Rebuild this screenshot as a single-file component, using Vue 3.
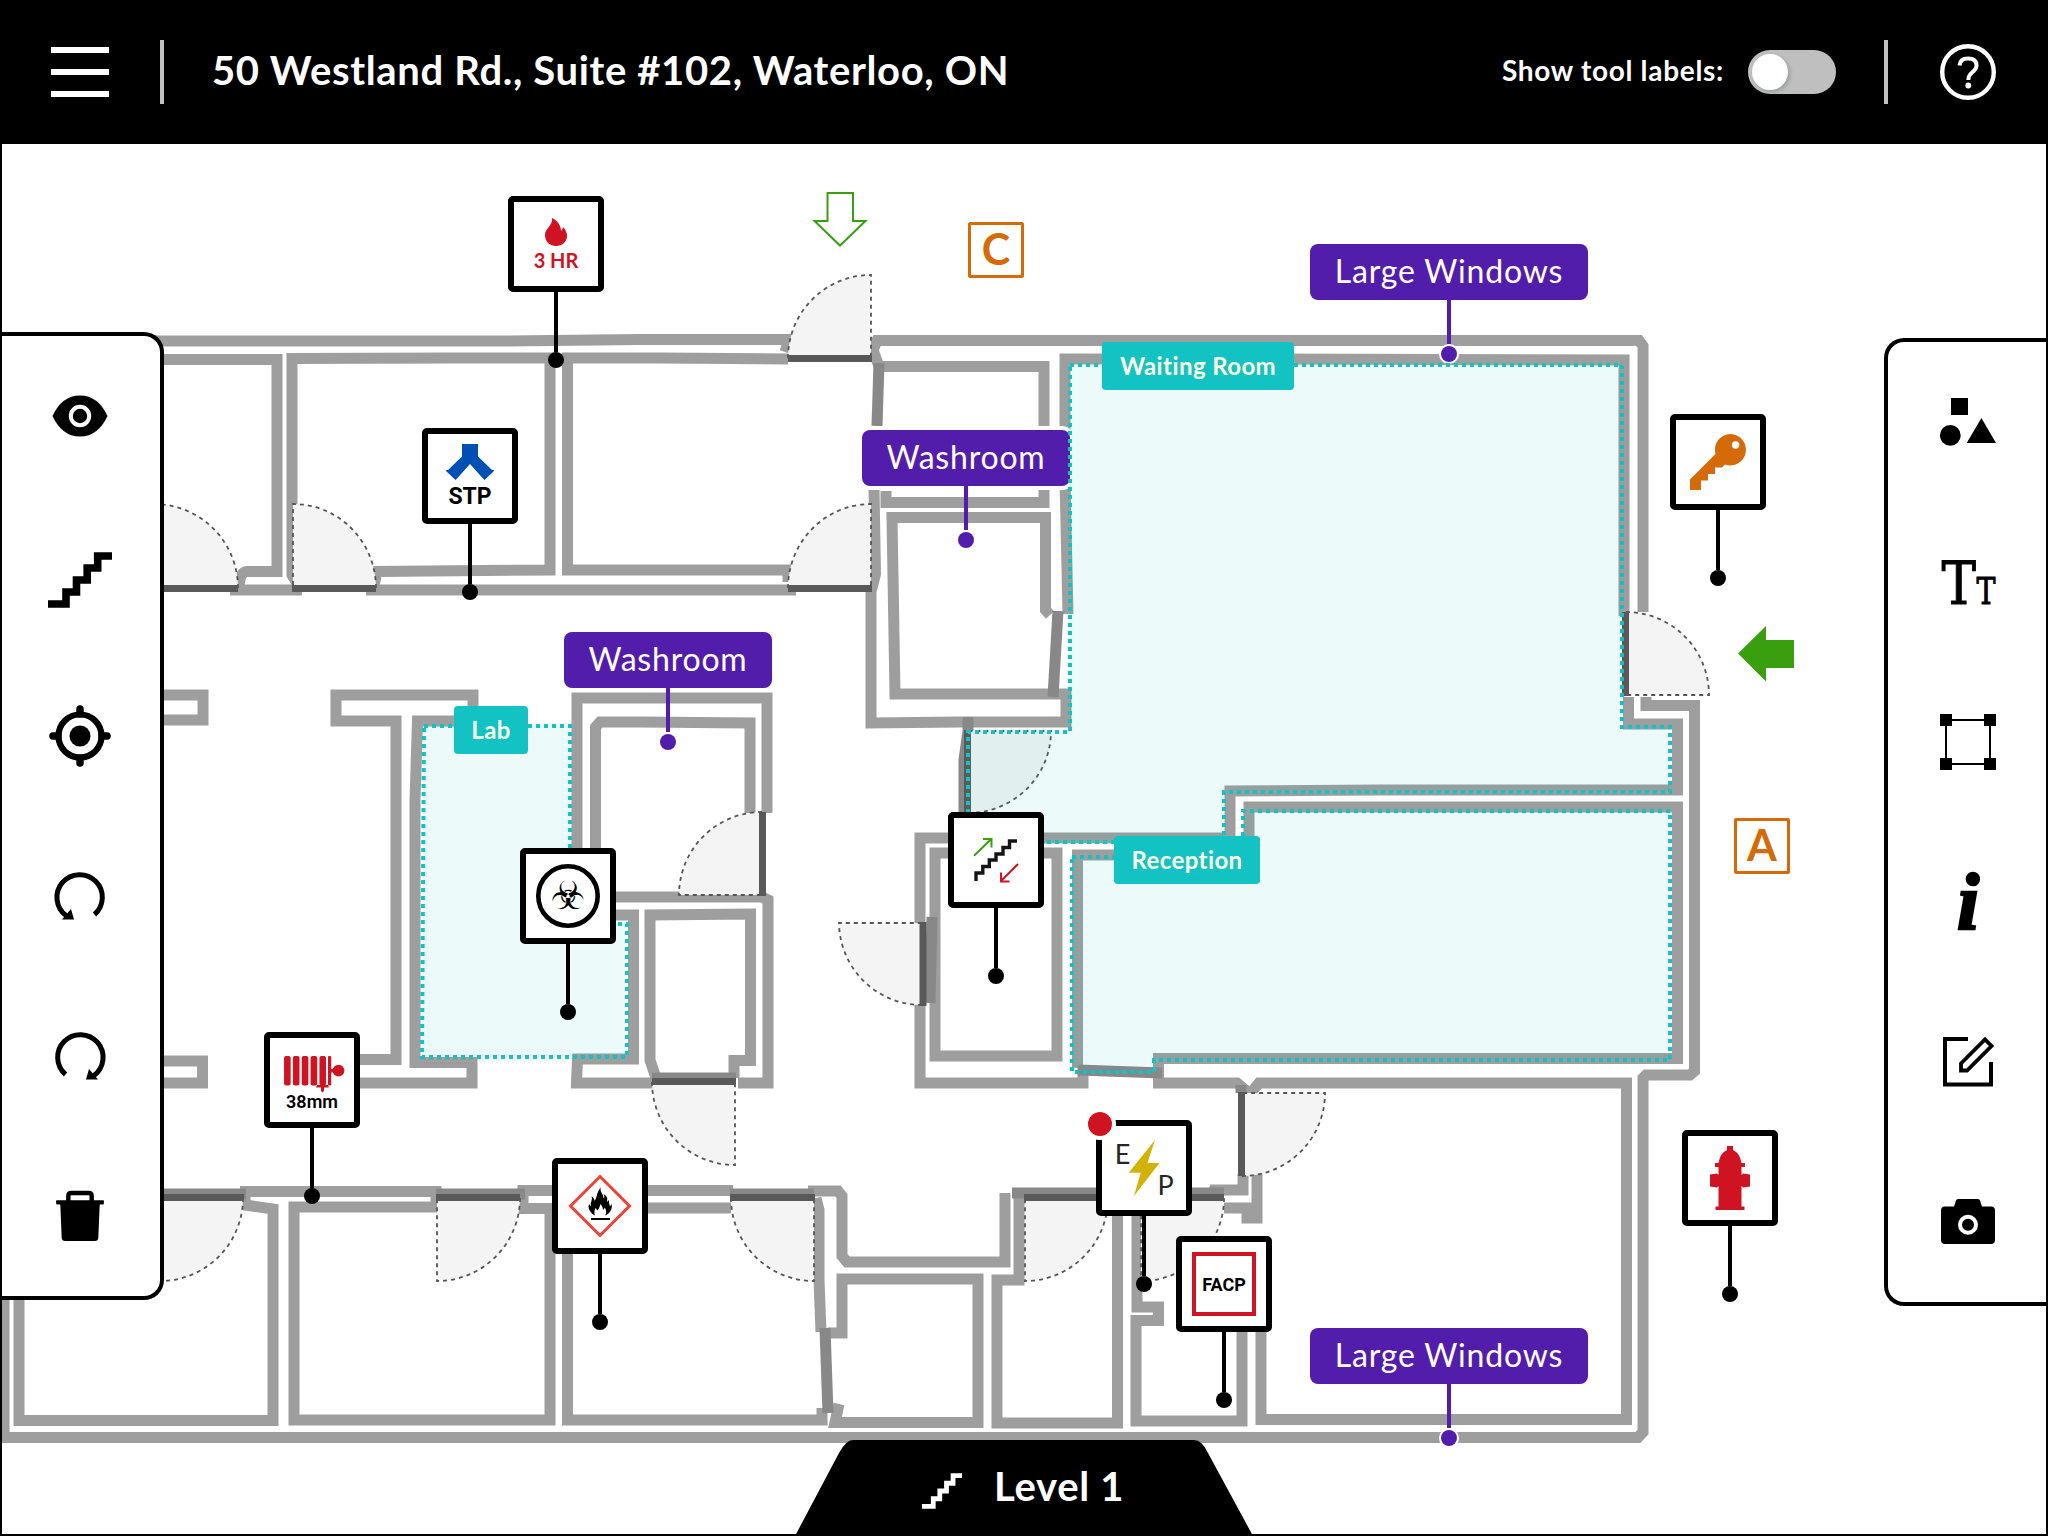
<script setup>
import { ref } from 'vue';

const showLabels = ref(false);

// plan coordinates are page pixels, the map starts below the header
const HEADER = 144;

const walls = [
    'M0 341 H500 L640 339.5 H789 L785 352',
    'M160 359.5 H277 V571.5 H247 Q239 572 239 590',
    'M230 590 H302',
    'M298 585 L292 575 V358.5 L450 358 H550 V570 L377 571.5 L374 586',
    'M366 590 H796',
    'M788 359 L660 358 H567.5 V570 H788 V582',
    'M160 695 H203 V720 H160',
    'M160 1061 H202.500 V1083 H160',
    'M340 1059.500 H396 V721 H336 V695 H473 V718',
    'M473 721 H417.500 L415 800 V1062.500 H472 V1083 H340',
    'M767 813 V698 H577 V915 H633.500 V1059 H577.500 L576.500 1083 H656',
    'M750 813 V723 L640 722 H600 L595.500 727 V897 H762 L768 900 V1083 H738',
    'M656 1078 L650 1060 V915 L750.500 914 V1060.500 H734 V1078',
    'M1643 612 V346 L1639 340.500 H877 L873 350 L879 366.500 H1044 V502.500 H886 V491',
    'M874 488 L875.500 574 L871 592 V723 L960 722 H1066 V694 H895 L892 517.500 H1045.500 V610 L1050 615',
    'M1624 616 V360 L1260 359 H1065 V480 L1068 614',
    'M1628.500 697 V724 H1677.500 V790 H1380 L1230 791 V838 H920 V1083 H1083 V1066',
    'M1646 697 V705.500 H1694.500 V1071 L1690 1075 H1646 L1643 1078 V1432 L1638 1437.500 H0',
    'M1077.500 1068 V855 H1249 V807 H1677.500 V1058.500 H1158.500 V1083 H1237 L1250 1094 L1259 1083 H1626.500 V1419.500 H1261 V1330',
    'M935 853 H1057 V1056 H935 Z',
    'M1243 1174 V1190 H1214 L1211 1197',
    'M1257 1170 V1218 H1247 V1208 H1224',
    'M240 1191.500 H436 V1207 H294 V1420 H550 V1208.500 H523 V1190.500 H733',
    'M245 1193 V1205 L273 1209 V1420.500 H19 V1290',
    'M4 1290 V1437',
    'M731 1208 H567.500 V1420 H822 V1408',
    'M808 1191 H838 L842 1196 V1256 L847 1262 H1005 V1193',
    'M816 1198 L819 1210 V1280 L821 1332',
    'M828 1333 H842 V1279 H978 V1422.500 H835 L839 1404',
    'M1019 1190 V1280 H997 V1423 H1117.500 V1200',
    'M1137 1200 V1307 H1158.500 V1320.500 H1136 V1421 H1242 V1325',
];

const darkWalls = [
    'M879 363 L877 426',
    'M1058 611 L1053 697',
    'M968 717 V731 L964 760 V812',
    'M932 917 L930 1003',
    'M1078 1070 L1162 1073',
    'M1241 1085 V1093',
    'M652 1078 H736',
    'M160 1194 H246',
    'M436 1194 H525',
    'M730 1194 H814',
    'M1012 1193 H1224',
    'M825 1328 L828 1413',
];

// bar: the closed door leaf, area: the quarter circle it swings through
const doors = [
    { bar: 'M788 358.500 H872', area: 'M788 358 A83 83 0 0 1 871 275 V358' },
    { bar: 'M788 588.500 H872', area: 'M788 588 A83 84 0 0 1 871 504 V588' },
    { bar: 'M154 588.500 H238', area: 'M238 588 A84 84 0 0 0 154 504 V588' },
    { bar: 'M292 588.500 H376', area: 'M376 588 A83 84 0 0 0 293 504 V588' },
    { bar: 'M762.500 812 V896', area: 'M762 812 A83 83 0 0 0 679 895 H762' },
    { bar: 'M652 1081.500 H736', area: 'M652 1082 A83 83 0 0 0 735 1165 V1082' },
    { bar: 'M923 922 V1006', area: 'M922 1005 A83 83 0 0 1 839 923 H922' },
    { bar: 'M967.500 730 V814', area: 'M968 813 A83 82 0 0 0 1051 731 H968' },
    { bar: 'M1625.500 612 V696', area: 'M1626 612 A83 83 0 0 1 1709 695 H1626' },
    { bar: 'M1241.500 1092 V1176', area: 'M1242 1176 A83 83 0 0 0 1325 1093 H1242' },
    { bar: 'M160 1197.500 H244', area: 'M243 1198 A83 83 0 0 1 160 1281 V1198' },
    { bar: 'M436 1197.500 H520', area: 'M520 1198 A83 83 0 0 1 437 1281 V1198' },
    { bar: 'M730 1197.500 H815', area: 'M731 1198 A83 83 0 0 0 814 1281 V1198' },
    { bar: 'M1024 1197.500 H1108', area: 'M1108 1198 A83 83 0 0 1 1025 1281 V1198' },
    { bar: 'M1140 1197.500 H1224', area: 'M1224 1198 A83 83 0 0 1 1141 1281 V1198' },
];

const zones = [
    'M424 726 H570 V924 H627 V1057 H422 Z',
    'M1070 365 H1622 V727 H1670 V792 H1224 V842 H968 V732 H1070 Z',
    'M1072 857 H1243 V811 H1670 V1060 H1154 V1072 H1072 Z',
];

const zoneLabels = [
    { text: 'Waiting Room', x: 1102, y: 342, w: 192 },
    { text: 'Lab', x: 454, y: 706, w: 74 },
    { text: 'Reception', x: 1114, y: 836, w: 146 },
];

const callouts = [
    { text: 'Large Windows', x: 1310, y: 244, w: 278 },
    { text: 'Washroom', x: 862, y: 430, w: 208 },
    { text: 'Washroom', x: 564, y: 632, w: 208 },
    { text: 'Large Windows', x: 1310, y: 1328, w: 278 },
];

const sides = [
    { text: 'C', x: 968, y: 222, w: 56 },
    { text: 'A', x: 1734, y: 818, w: 56 },
];

const markers = [
    { kind: 'rating', x: 508, y: 196 },
    { kind: 'standpipe', x: 422, y: 428 },
    { kind: 'biohazard', x: 520, y: 848 },
    { kind: 'hose', x: 264, y: 1032 },
    { kind: 'stairs', x: 948, y: 812 },
    { kind: 'flammable', x: 552, y: 1158 },
    { kind: 'power', x: 1096, y: 1120, alert: true },
    { kind: 'panel', x: 1176, y: 1236 },
    { kind: 'key', x: 1670, y: 414 },
    { kind: 'hydrant', x: 1682, y: 1130 },
];

const place = (item) => ({
    left: `${item.x}px`,
    top: `${item.y - HEADER}px`,
    width: item.w ? `${item.w}px` : null,
});
</script>

<template>
    <div class="app">
        <header class="topbar">
            <button type="button" class="menu" aria-label="Menu">
                <span></span>
                <span></span>
                <span></span>
            </button>
            <i class="divider"></i>
            <h1>50 Westland Rd., Suite #102, Waterloo, ON</h1>
            <span class="toggle-label">Show tool labels:</span>
            <button type="button" class="toggle" :class="{ on: showLabels }" aria-label="Show tool labels" @click="showLabels = !showLabels">
                <span></span>
            </button>
            <i class="divider"></i>
            <button type="button" class="help" aria-label="Help">
                <svg width="56" height="56" viewBox="0 0 56 56" fill="none" stroke="#fff">
                    <circle cx="28" cy="28" r="25.800" stroke-width="4.400" />
                    <path d="M19.500 21.500 Q20 14.500 28 14.500 Q36.500 14.500 36.500 21.500 Q36.500 25 32 28.500 Q28.300 31.500 28.300 36" stroke-width="4" />
                    <circle cx="28.300" cy="41.500" r="2.900" fill="#fff" stroke="none" />
                </svg>
            </button>
        </header>

        <main class="stage">
            <svg class="layer" width="2048" height="1392" viewBox="0 144 2048 1392" fill="none">
                <g class="walls">
                    <path v-for="d in walls" :key="d" :d="d" />
                </g>
                <g class="walls dark">
                    <path v-for="d in darkWalls" :key="d" :d="d" />
                </g>
                <g v-for="door in doors" :key="door.area">
                    <path class="swing" :d="door.area" />
                    <path class="leaf" :d="door.bar" />
                </g>
                <path d="M827.500 193 H853 V221 H865.500 L840 245.500 L814.500 221 H827.500 Z" stroke="#3a9f0e" stroke-width="2" />
                <path d="M1738 653.500 L1766 626 V640 H1794 V668 H1766 V681.500 Z" fill="#3a9f0e" />
            </svg>

            <div v-for="(item, i) in callouts" :key="i" class="callout" :style="place(item)">
                <span class="callout-text">{{ item.text }}</span>
                <i class="stem"></i>
                <i class="dot"></i>
            </div>

            <svg class="layer" width="2048" height="1392" viewBox="0 144 2048 1392">
                <path v-for="d in zones" :key="d" class="zone" :d="d" />
            </svg>

            <div v-for="item in zoneLabels" :key="item.text" class="zone-label" :style="place(item)">{{ item.text }}</div>
            <div v-for="item in sides" :key="item.text" class="side" :style="place(item)">{{ item.text }}</div>

            <div v-for="item in markers" :key="item.kind" class="marker" :style="place(item)">
                <div class="marker-box">
                    <svg width="84" height="84" viewBox="6 6 84 84">
                        <g v-if="item.kind === 'rating'" fill="#cf1322">
                            <path d="M44 22 C50 25 53 30 53 35 Q55 33 55 31 Q59 35 59 40 C59 46 54 50 48 50 C42 50 37 46 37 39 C37 32 45 30 44 22 Z" />
                            <text x="48" y="72" class="t-rating">3 HR</text>
                        </g>
                        <g v-else-if="item.kind === 'standpipe'">
                            <path d="M40 16 H56 V28.500 L70 42 L72 42 L71.500 43.500 L62.500 52 L61 50.500 L48 36 L35 50.500 L33.500 52 L24.500 43.500 L24 42 L26 42 L40 28.500 Z" fill="#0050b3" />
                            <text x="48" y="76" class="t-standpipe">STP</text>
                        </g>
                        <g v-else-if="item.kind === 'biohazard'">
                            <circle cx="48" cy="48" r="29.700" fill="none" stroke="#000" stroke-width="4.600" />
                            <text x="48" y="61" class="t-bio">☣</text>
                        </g>
                        <g v-else-if="item.kind === 'hose'">
                            <g fill="#cf1322">
                                <rect v-for="n in 5" :key="n" :x="11.200 + n * 8.850" y="24" width="6.600" height="29.500" rx="2" />
                                <rect x="64" y="24" width="3.200" height="29.500" rx="1" />
                                <circle cx="74.500" cy="38.600" r="5.900" />
                                <path d="M66 37 H71 V40.500 H66 Z M53 53 H64 L65 55.500 H60 V59 L58.500 60.500 L57 59 V55.500 H52 Z" />
                            </g>
                            <text x="48" y="75.500" class="t-hose">38mm</text>
                        </g>
                        <g v-else-if="item.kind === 'stairs'" fill="none">
                            <path d="M69 29 H61.500 V35.500 H55 V42 H48 V48 H41.300 V54.500 H34.800 V61 H28 V69" stroke="#141414" stroke-width="3.400" />
                            <path d="M26 43.700 L43 27.200 M35 27 H43.500 V35.500" stroke="#3a9f0e" stroke-width="2" />
                            <path d="M70 52 L53 69 M53 60.500 V69.500 H61.500" stroke="#cf1322" stroke-width="2" />
                        </g>
                        <g v-else-if="item.kind === 'flammable'">
                            <path d="M48 18.500 L77.500 48 L48 77.500 L18.500 48 Z" fill="none" stroke="#ef4136" stroke-width="3" />
                            <path d="M43 57.500 C38 55 35.500 50 37 46 L39 48.500 C38 44 41 42 39.500 38.500 Q42.500 40 42.500 43 C45.500 39 44 36 48.500 29.500 C48 35 51.500 35.500 51.500 40.500 C53 39 52.500 37.500 51.500 36 Q56.500 38.500 55 44 L57 42 Q56.500 45 58 48.500 L59.500 46 C61 51 57.500 56 53 57.500 C55.500 54 53.500 52 53 49.500 L51 52 Q50.500 48 48.500 46 Q47.500 50 45.500 52.500 L43.500 50 Q41.500 54 43 57.500 Z" />
                            <path d="M39 60 H58 V62 H39 Z" />
                        </g>
                        <g v-else-if="item.kind === 'power'">
                            <path d="M59 20 L32.700 52.700 H44.700 L38 76 L63.500 43 H51.500 Z" fill="#d4b106" />
                            <text x="26.500" y="43.500" class="t-power">E</text>
                            <text x="69.500" y="75" class="t-power">P</text>
                        </g>
                        <g v-else-if="item.kind === 'panel'">
                            <rect x="18" y="18" width="60" height="60" fill="none" stroke="#cf1322" stroke-width="4" />
                            <text x="48" y="54.500" class="t-panel">FACP</text>
                        </g>
                        <g v-else-if="item.kind === 'key'">
                            <path d="M60.400 20 A15.700 15.700 0 1 1 55 50.500 L52 53.500 H45 V60 H38 V66.500 H31 V76 H20 V65.500 L45.500 40 A15.700 15.700 0 0 1 60.400 20 Z" fill="#d46b08" />
                            <circle cx="65.600" cy="31" r="3.700" fill="#fff" />
                        </g>
                        <g v-else fill="#cf1322">
                            <path d="M45 16 H51 V20 Q58 23 59.500 33 H63 V37 H59.500 V45 L61 43.500 L68 44.500 V56.500 L61 57.500 L59.500 56 V76.500 H62.500 V80 H33.500 V76.500 H36.500 V56 L35 57.500 L28 56.500 V44.500 L35 43.500 L36.500 45 V37 H33 V33 H36.500 Q38 23 45 20 Z" />
                        </g>
                    </svg>
                    <i v-if="item.alert" class="alert"></i>
                </div>
                <i class="stem"></i>
                <i class="dot"></i>
            </div>

            <nav class="tools left">
                <button type="button" aria-label="Visibility">
                    <svg width="64" height="64" viewBox="0 0 64 64">
                        <path d="M4.500 32 Q14 11.500 32 11.500 Q50 11.500 59.500 32 Q50 52.500 32 52.500 Q14 52.500 4.500 32 Z" />
                        <circle cx="32" cy="32" r="9.200" stroke="#fff" stroke-width="4" />
                    </svg>
                </button>
                <button type="button" aria-label="Stairs">
                    <svg width="64" height="64" viewBox="0 -4 64 64">
                        <path d="M64 8 H49.700 V20 H39.200 V32 H28.500 V44 H18 V56 H0" fill="none" stroke="#000" stroke-width="7.600" />
                    </svg>
                </button>
                <button type="button" aria-label="Locate">
                    <svg width="64" height="64" viewBox="0 0 64 64">
                        <circle cx="32" cy="32" r="21.500" fill="none" stroke="#000" stroke-width="6.200" />
                        <circle cx="32" cy="32" r="10.500" />
                        <path d="M32 5 V10 M32 54 V59 M5 32 H10 M54 32 H59" stroke="#000" stroke-width="7.500" stroke-linecap="round" />
                    </svg>
                </button>
                <button type="button" aria-label="Undo">
                    <svg width="64" height="64" viewBox="0 0 64 64">
                        <path d="M46.500 50.500 A22.700 22.700 0 1 0 18 51.500" fill="none" stroke="#000" stroke-width="5" />
                        <path d="M14 55.500 H26 L23 45 Z" />
                    </svg>
                </button>
                <button type="button" aria-label="Redo">
                    <svg width="64" height="64" viewBox="0 0 64 64">
                        <path d="M17.500 50.500 A22.700 22.700 0 1 1 46 51.500" fill="none" stroke="#000" stroke-width="5" />
                        <path d="M50 55.500 H38 L41 45 Z" />
                    </svg>
                </button>
                <button type="button" aria-label="Delete">
                    <svg width="64" height="64" viewBox="0 0 64 64">
                        <path d="M20.300 18 V12 Q20.300 9 23.300 9 H40.700 Q43.700 9 43.700 12 V18" fill="none" stroke="#000" stroke-width="4.400" />
                        <path d="M9 16.200 H55 Q56 16.200 56 17.500 Q56 20.500 55 20.500 H51.700 L50.300 54 Q50 57 47 57 H17 Q14 57 13.700 54 L12.300 20.500 H9 Q8 20.500 8 17.500 Q8 16.200 9 16.200 Z" />
                    </svg>
                </button>
            </nav>

            <nav class="tools right">
                <button type="button" aria-label="Shapes">
                    <svg width="64" height="64" viewBox="0 0 64 64">
                        <rect x="15" y="8" width="17" height="17" />
                        <circle cx="14.300" cy="45.400" r="10.400" />
                        <path d="M45.400 28 L60 53 H30.700 Z" />
                    </svg>
                </button>
                <button type="button" aria-label="Text">
                    <svg width="64" height="96" viewBox="0 -16 64 96">
                        <text class="t-tool" x="5.500" y="53.500" font-size="60" textLength="34.500" lengthAdjust="spacingAndGlyphs">T</text>
                        <text class="t-tool" x="40.500" y="53.500" font-size="38" textLength="19" lengthAdjust="spacingAndGlyphs">T</text>
                    </svg>
                </button>
                <button type="button" aria-label="Area">
                    <svg width="64" height="64" viewBox="0 0 64 64">
                        <rect x="10" y="10" width="44" height="44" fill="none" stroke="#000" stroke-width="2" />
                        <path d="M4 4 h12 v12 h-12 Z M48 4 h12 v12 h-12 Z M4 48 h12 v12 h-12 Z M48 48 h12 v12 h-12 Z" />
                    </svg>
                </button>
                <button type="button" aria-label="Info" class="info">i</button>
                <button type="button" aria-label="Edit">
                    <svg width="64" height="64" viewBox="0 0 64 64" fill="none" stroke="#000" stroke-width="4">
                        <path d="M32 9 H9 V54.600 H55 V32" />
                        <path d="M25 40.500 V33.500 L49 9.500 L55.500 16 L31 40.500 Z" stroke-width="3.800" />
                    </svg>
                </button>
                <button type="button" aria-label="Photo">
                    <svg width="64" height="64" viewBox="0 0 64 64">
                        <path d="M9 16.600 H18 L20 10.500 Q20.500 9 22 9 H42 Q43.500 9 44 10.500 L46 16.600 H55 Q59 16.600 59 20.600 V50 Q59 54 55 54 H9 Q5 54 5 50 V20.600 Q5 16.600 9 16.600 Z" />
                        <circle cx="32" cy="34.700" r="8" stroke="#fff" stroke-width="4" />
                    </svg>
                </button>
            </nav>

            <div class="level">
                <svg class="level-shape" width="458" height="96" viewBox="0 0 458 96">
                    <path d="M0 96 L44 13 Q51 0 58 0 H399 Q407 0 413 13 L458 96 Z" />
                </svg>
                <svg class="level-icon" width="40" height="36" viewBox="0 0 64 56" preserveAspectRatio="none">
                    <path d="M64 4 H49.700 V16 H39.200 V28 H28.500 V40 H18 V52 H0" fill="none" stroke="#fff" stroke-width="7.600" />
                </svg>
                <span>Level 1</span>
            </div>
        </main>
    </div>
</template>

<style>
body {
    margin: 0;
}
</style>

<style scoped>
.app {
    position: relative;
    width: 2048px;
    height: 1536px;
    overflow: hidden;
    background: #fff;
    font-family: Lato, "Open Sans", sans-serif;
}

.app::after {
    content: "";
    position: absolute;
    inset: 0;
    border: 2px solid #000;
    pointer-events: none;
}

button {
    padding: 0;
    border: 0;
    background: none;
    cursor: pointer;
}

.topbar {
    box-sizing: border-box;
    height: 144px;
    padding: 0 52px 0 51px;
    display: flex;
    align-items: center;
    background: #000;
    color: #fff;
}

.menu {
    width: 58px;
    display: flex;
    flex-direction: column;
    gap: 16px;
}

.menu span {
    height: 6px;
    background: #fff;
}

.divider {
    width: 4px;
    height: 64px;
    margin-left: 51px;
    background: #bfbfbf;
}

.topbar h1 {
    flex: 1;
    margin: 0 0 4px 48px;
    font-size: 40px;
    font-weight: 700;
    line-height: 48px;
    letter-spacing: 0.64px;
    white-space: nowrap;
}

.toggle-label {
    margin: 0 24px 4px 0;
    font-size: 28px;
    font-weight: 700;
    line-height: 34px;
    letter-spacing: 0.7px;
}

.toggle {
    width: 88px;
    height: 44px;
    border-radius: 22px;
    background: #bfbfbf;
}

.toggle span {
    display: block;
    width: 36px;
    height: 36px;
    margin-left: 4px;
    border-radius: 50%;
    background: #fff;
    box-shadow: 2px 2px 4px rgba(0, 35, 11, 0.2);
}

.toggle.on span {
    margin-left: 48px;
}

.toggle + .divider {
    margin-left: 48px;
}

.help {
    width: 56px;
    height: 56px;
    margin-left: 52px;
}

.stage {
    position: relative;
    height: 1392px;
    display: flex;
    justify-content: space-between;
    align-items: flex-start;
}

.layer {
    position: absolute;
    left: 0;
    top: 0;
}

.walls path {
    stroke: #9e9e9e;
    stroke-width: 11px;
}

.walls.dark path {
    stroke: #888;
}

.swing {
    fill: #f4f4f4;
    stroke: #555;
    stroke-width: 1.8px;
    stroke-dasharray: 4 4;
}

.leaf {
    stroke: #595959;
    stroke-width: 7px;
}

.zone {
    fill: rgba(19, 194, 194, 0.08);
    stroke: #13c2c2;
    stroke-width: 4px;
    stroke-dasharray: 4 4;
}

.callout,
.marker {
    position: absolute;
    display: flex;
    flex-direction: column;
    align-items: center;
}

.callout-text {
    width: 100%;
    height: 56px;
    border-radius: 8px;
    background: #531dab;
    box-shadow: 0 0 0 4px #fff;
    color: #fff;
    font-size: 32px;
    line-height: 53px;
    letter-spacing: 0.8px;
    text-align: center;
}

.callout .stem {
    width: 4px;
    height: 44px;
    background: #531dab;
    position: relative;
}

.callout .dot {
    width: 16px;
    height: 16px;
    margin-top: 2px;
    border-radius: 50%;
    background: #531dab;
    box-shadow: 0 0 0 2px #fff;
}

.zone-label {
    position: absolute;
    height: 48px;
    border-radius: 4px;
    background: #13c2c2;
    color: #fcffe6;
    font-size: 24px;
    font-weight: 700;
    line-height: 47px;
    letter-spacing: 0.4px;
    text-align: center;
}

.side {
    position: absolute;
    box-sizing: border-box;
    height: 56px;
    border: 3px solid #d46b08;
    border-radius: 2px;
    background: #fff;
    color: #d46b08;
    font-size: 43px;
    font-weight: 700;
    line-height: 48px;
    text-align: center;
}

.marker-box {
    position: relative;
    display: flex;
    border: 6px solid #000;
    border-radius: 5px;
    background: #fff;
}

.marker .stem {
    width: 4px;
    height: 60px;
    background: #000;
}

.marker .dot {
    width: 16px;
    height: 16px;
    border-radius: 50%;
    background: #000;
}

.alert {
    position: absolute;
    left: -14px;
    top: -14px;
    width: 24px;
    height: 24px;
    border-radius: 50%;
    background: #cf1322;
    box-shadow: 0 0 0 4px #fff;
}

.marker text {
    text-anchor: middle;
}

.t-rating {
    font: 700 20px Lato, sans-serif;
}

.t-standpipe {
    font: 700 23px Roboto, sans-serif;
}

.t-bio {
    font: 39px "DejaVu Sans", sans-serif;
}

.t-hose {
    font: 600 18px Roboto, sans-serif;
}

.t-power {
    font: 27px Lato, sans-serif;
    fill: #262626;
}

.t-panel {
    font: 700 18px Roboto, sans-serif;
}

.tools {
    position: relative;
    height: 960px;
    border: 4px solid #000;
    background: #fff;
    display: flex;
    flex-direction: column;
}

.tools.left {
    width: 160px;
    margin-top: 188px;
    border-left: 0;
    border-radius: 0 20px 20px 0;
}

.tools.right {
    width: 160px;
    margin-top: 194px;
    border-right: 0;
    border-radius: 20px 0 0 20px;
}

.tools button {
    height: 160px;
    display: flex;
    align-items: center;
    justify-content: center;
}

.tools .info {
    color: #000;
    font: italic 700 80px/160px "Liberation Serif", serif;
    -webkit-text-stroke: 2.5px #000;
}

.t-tool {
    font-family: "DejaVu Serif", serif;
    stroke: #000;
    stroke-width: 1px;
}

.level {
    position: absolute;
    left: 795px;
    bottom: 0;
    width: 458px;
    height: 96px;
    display: flex;
    align-items: center;
    color: #fff;
    font-size: 40px;
    font-weight: 700;
    letter-spacing: 0.7px;
}

.level-shape {
    position: absolute;
    left: 0;
    top: 0;
}

.level-icon {
    position: relative;
    margin: 6px 32px 0 127px;
}

.level span {
    position: relative;
    top: -2px;
}
</style>
